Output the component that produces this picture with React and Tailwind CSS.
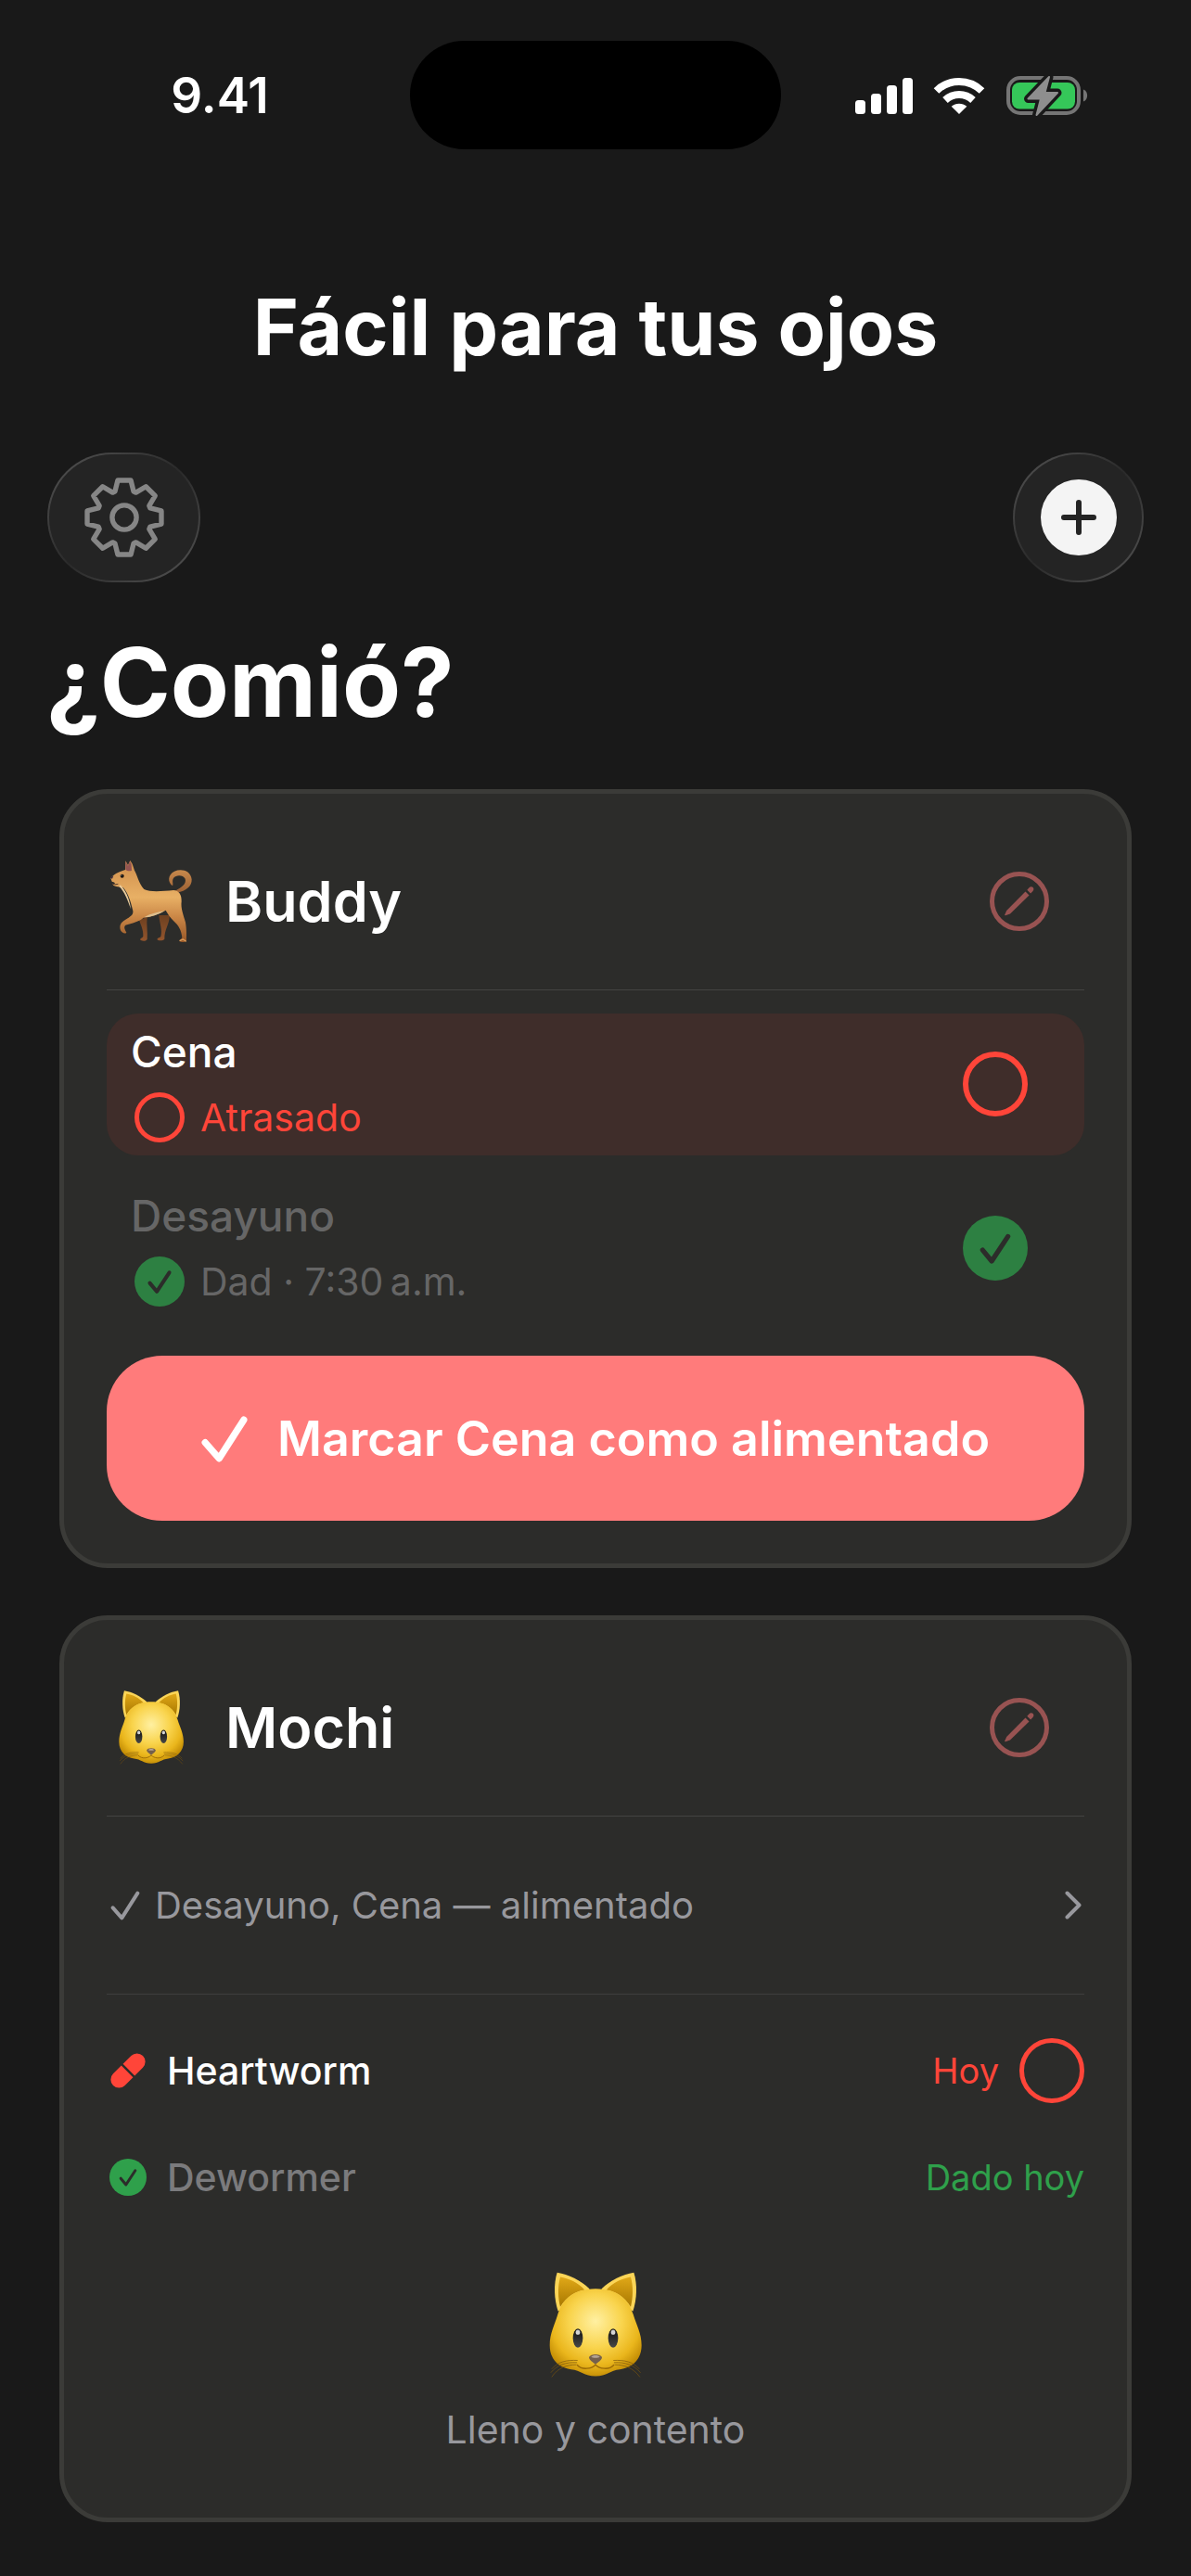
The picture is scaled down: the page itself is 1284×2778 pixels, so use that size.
import React from "react";

const gearPoints = [0, 1, 2, 3, 4, 5, 6, 7]
  .flatMap((tooth) => {
    const angle = (tooth * Math.PI) / 4;
    return [
      [-30, -83],
      [-21, -119],
      [21, -119],
      [30, -83],
    ].map(([x, y]) => {
      const px = x * Math.cos(angle) - y * Math.sin(angle);
      const py = x * Math.sin(angle) + y * Math.cos(angle);
      return `${px.toFixed(1)},${py.toFixed(1)}`;
    });
  })
  .join(" ");

function GearIcon() {
  return (
    <svg viewBox="-128 -128 256 256" className="size-[86px]" fill="none" stroke="#868686" strokeWidth="16" strokeLinejoin="round">
      <polygon points={gearPoints} />
      <circle r="39" />
    </svg>
  );
}

function PlusIcon() {
  return (
    <svg viewBox="0 0 82 82" className="size-[82px]">
      <circle cx="41" cy="41" r="41" fill="#f4f4f4" />
      <path d="M41 25v32M25 41h32" stroke="#242424" strokeWidth="6" strokeLinecap="round" />
    </svg>
  );
}

function PencilIcon() {
  return (
    <svg viewBox="0 0 64 64" className="size-16">
      <circle cx="32" cy="32" r="29.5" fill="none" stroke="#985352" strokeWidth="5" />
      <path d="M38.5 21.5l4 4L22 45.5l-5 1.8c-.6.2-1-.2-.8-.8l2-4.6z" fill="#985352" />
      <path d="M40.3 19.7l2-2.2c1.4-1.6 3.4-1.5 4.4-.4s1 2.8-.4 4.2l-2.2 2.2z" fill="#985352" />
    </svg>
  );
}

function CheckIcon({ className, strokeWidth }) {
  return (
    <svg viewBox="0 0 48 48" className={className} fill="none" stroke="currentColor" strokeWidth={strokeWidth} strokeLinecap="round" strokeLinejoin="round">
      <path d="M4 27.5l14.5 16.5L44 4" />
    </svg>
  );
}

function CheckCircle({ className }) {
  return (
    <svg viewBox="0 0 100 100" className={className}>
      <circle cx="50" cy="50" r="50" fill="currentColor" />
      <path d="M30.5 53L44.5 70L69.5 32" fill="none" stroke="#2c2c2a" strokeWidth="7.5" strokeLinecap="round" strokeLinejoin="round" />
    </svg>
  );
}

function PillIcon() {
  return (
    <svg viewBox="0 0 38 38" className="size-10" fill="#ff4539">
      <g transform="rotate(-45 19 19)">
        <path d="M17.8 10.5H6a8.5 8.5 0 0 0 0 17h11.8z" />
        <path d="M20.2 10.5H32a8.5 8.5 0 0 1 0 17H20.2z" />
      </g>
    </svg>
  );
}

function ChevronIcon() {
  return (
    <svg viewBox="0 0 18 31" className="h-[31px] w-[18px]" fill="none" stroke="#98989d" strokeWidth="4" strokeLinecap="round" strokeLinejoin="round">
      <path d="M2.5 2.5L15.5 15.5L2.5 28.5" />
    </svg>
  );
}

function StatusIcons() {
  return (
    <svg viewBox="0 0 251 44" className="h-11 w-[251px]">
      <g fill="#fff">
        <rect x="0" y="27" width="11" height="15" rx="3.5" />
        <rect x="17" y="20" width="11" height="22" rx="3.5" />
        <rect x="34" y="11" width="11" height="31" rx="3.5" />
        <rect x="51" y="3" width="11" height="39" rx="3.5" />
      </g>
      <g fill="none" stroke="#fff">
        <path d="M87.5 17a35 35 0 0 1 49 0" strokeWidth="8" />
        <path d="M97 27a22 22 0 0 1 30 0" strokeWidth="8" />
      </g>
      <path d="M112 42l-8.3-8.3c4.7-4 11.9-4 16.6 0z" fill="#fff" />
      <rect x="165" y="3" width="76" height="38" rx="13" fill="none" stroke="#757575" strokeWidth="4" />
      <rect x="169" y="8" width="68" height="28.5" rx="8" fill="#35c759" />
      <path d="M246 15.5c5.5 2 5.5 11 0 13z" fill="#757575" />
      <path
        d="M209 2l-22.5 23.5h13.5L195.5 43l22.5-24h-13.5z"
        fill="#191919"
        stroke="#191919"
        strokeWidth="9"
        strokeLinejoin="round"
      />
      <path
        d="M209 2l-22.5 23.5h13.5L195.5 43l22.5-24h-13.5z"
        fill="#8e8e8e"
        stroke="#8e8e8e"
        strokeWidth="2"
        strokeLinejoin="round"
      />
    </svg>
  );
}

function Dog() {
  return (
    <svg viewBox="178 262 270 270" className="size-[90px]" role="img" aria-label="Perro">
      <defs>
        <linearGradient id="dogCoat" x1="0" y1="0" x2="0" y2="1">
          <stop offset="0" stopColor="#cf8d4b" />
          <stop offset="0.45" stopColor="#e8b065" />
          <stop offset="0.7" stopColor="#c98545" />
          <stop offset="1" stopColor="#965728" />
        </linearGradient>
        <linearGradient id="dogTail" x1="0" y1="0" x2="0" y2="1">
          <stop offset="0" stopColor="#c8894c" />
          <stop offset="1" stopColor="#9a5f33" />
        </linearGradient>
        <linearGradient id="dogLeg" x1="0" y1="0" x2="0" y2="1">
          <stop offset="0" stopColor="#6d4020" />
          <stop offset="1" stopColor="#93552d" />
        </linearGradient>
      </defs>
      <path d="M274 458L300 448C297 470 302 495 300 520C295 528 280 526 277 521C278 516 286 514 287 510C288 490 280 475 274 458Z" fill="url(#dogLeg)" />
      <path d="M338 442L372 442C374 468 355 488 356 519C350 526 335 525 332 520C333 515 342 514 344 511C350 488 340 470 338 442Z" fill="url(#dogLeg)" />
      <path
        d="M397 370C426 362 445 350 444 326C440 296 410 291 388 300C366 311 366 335 382 347C386 340 379 332 385 322C394 310 416 311 423 324C428 341 410 352 391 363Z"
        fill="url(#dogTail)"
      />
      <path
        d="M182 322C190 312 205 302 229 295L230 266L238 280L245 265L252 276L259 297C268 312 272 338 290 358C310 368 350 364 385 361C402 362 412 374 411 397C408 420 417 440 424 465C428 490 427 505 427 524C425 531 410 530 405 527C404 521 412 518 413 514C410 490 402 475 385 460C375 450 368 440 360 426C335 440 310 448 288 450C275 462 250 468 230 474C223 480 228 488 233 498C228 504 218 498 214 491C209 475 215 465 229 457C245 447 256 442 254 428C247 400 239 370 222 352C206 350 191 350 188 341C196 340 202 338 186 333Z"
        fill="url(#dogCoat)"
      />
      <path d="M209 349C226 364 238 395 247 422C243 385 228 359 213 344Z" fill="#e9cb9b" />
      <path d="M290 449C310 437 335 431 357 428C336 441 312 448 290 449Z" fill="#dcbf90" />
      <path d="M230 294L230 268L238 282L244 267L249 278L250 297C243 301 235 298 230 294Z" fill="#945552" />
      <path d="M182 318L191 315L187 324L182 322Z" fill="#3a2a3a" />
      <path d="M188 340C196 344 202 342 206 341" stroke="#4a3125" strokeWidth="3" fill="none" />
      <circle cx="219" cy="315" r="6" fill="#17120f" />
      <circle cx="217" cy="313" r="1.5" fill="#d8d8d8" />
      <path d="M406 524l10-4l9 6" stroke="#e0a05a" strokeWidth="4" fill="none" strokeLinecap="round" />
    </svg>
  );
}

function Cat({ className }) {
  return (
    <svg viewBox="390 88 306 350" className={className} role="img" aria-label="Gato">
      <defs>
        <radialGradient id="catFace" gradientUnits="userSpaceOnUse" cx="543" cy="250" r="190">
          <stop offset="0" stopColor="#fff0a2" />
          <stop offset="0.45" stopColor="#f9d44d" />
          <stop offset="0.75" stopColor="#eab61c" />
          <stop offset="1" stopColor="#bb8400" />
        </radialGradient>
        <linearGradient id="catEar" x1="0" y1="0" x2="0" y2="1">
          <stop offset="0" stopColor="#e0a818" />
          <stop offset="1" stopColor="#a87800" />
        </linearGradient>
        <linearGradient id="catEye" x1="0" y1="0" x2="0" y2="1">
          <stop offset="0" stopColor="#111" />
          <stop offset="1" stopColor="#484848" />
        </linearGradient>
      </defs>
      <path d="M419 93C407 130 409 180 422 218L524 146C495 118 455 99 419 93Z" fill="#fbd557" />
      <path d="M667 93C679 130 677 180 664 218L562 146C591 118 631 99 667 93Z" fill="#fbd557" />
      <path d="M429 107C420 140 422 175 429 204C450 170 480 152 508 149C488 126 455 111 429 107Z" fill="url(#catEar)" />
      <path d="M657 107C666 140 664 175 657 204C636 170 606 152 578 149C598 126 631 111 657 107Z" fill="url(#catEar)" />
      <path
        d="M543 145C620 145 653 188 665 228C675 262 692 290 692 328C692 375 660 401 622 406C590 409 580 428 543 428C506 428 496 409 464 406C426 401 395 375 395 328C395 290 411 262 421 228C433 188 466 145 543 145Z"
        fill="url(#catFace)"
      />
      <g fill="none" stroke="#7a5410" strokeWidth="2.5" strokeLinecap="round" opacity="0.8">
        <path d="M484 377C450 375 420 382 402 404" />
        <path d="M482 384C448 382 418 392 399 416" />
        <path d="M480 391C450 391 422 400 402 430" />
        <path d="M602 377C636 375 666 382 684 404" />
        <path d="M604 384C638 382 668 392 688 416" />
        <path d="M606 391C636 391 664 400 686 430" />
      </g>
      <path d="M484 392C500 410 530 404 543 391C556 404 586 410 602 392" fill="none" stroke="#9b6a06" strokeWidth="4" strokeLinecap="round" />
      <ellipse cx="486" cy="305" rx="16" ry="31" fill="url(#catEye)" />
      <ellipse cx="600" cy="305" rx="16" ry="31" fill="url(#catEye)" />
      <ellipse cx="486" cy="286" rx="7" ry="8" fill="#e8e8e8" opacity="0.9" />
      <ellipse cx="600" cy="286" rx="7" ry="8" fill="#e8e8e8" opacity="0.9" />
      <path d="M522 368C524 354 562 354 564 368C563 376 550 384 543 390C536 384 523 376 522 368Z" fill="#75604c" />
      <path d="M529 366C535 359 551 359 557 366C551 370 535 370 529 366Z" fill="#b5a494" />
    </svg>
  );
}

function GlassButton({ label, className, children }) {
  return (
    <button
      type="button"
      aria-label={label}
      className="rounded-full bg-linear-to-br from-[#565656] via-[#2a2a2a] to-[#565656] p-[2px]"
    >
      <span className={`flex items-center justify-center rounded-full bg-[#242424] ${className}`}>
        {children}
      </span>
    </button>
  );
}

function PetCard({ name, avatar, className, children }) {
  return (
    <section className={`rounded-[52px] border-5 border-[#3b3b38] bg-[#2c2c2a] px-[46px] pt-5 ${className}`}>
      <div className="flex h-48 items-center gap-8 border-b border-[#444442] pr-[38px]">
        <div className="flex w-24 justify-center">{avatar}</div>
        <h2 className="flex-1 text-[61px] leading-[80px] font-semibold">{name}</h2>
        <button type="button" aria-label={`Editar ${name}`}>
          <PencilIcon />
        </button>
      </div>
      {children}
    </section>
  );
}

function MealRow({ meal, status, done }) {
  return (
    <div
      className={`flex items-center justify-between rounded-[34px] pt-[13px] pr-[61px] pb-[14px] pl-[26px] ${
        done ? "text-[#666666]" : "bg-[#3f2d2a] text-white"
      }`}
    >
      <div>
        <h3 className="text-[46px] leading-[56px] font-medium">{meal}</h3>
        <div className="mt-4 flex items-center gap-[17px] pl-1">
          {done ? (
            <CheckCircle className="size-[54px] text-[#2d8042]" />
          ) : (
            <span className="size-[54px] rounded-full border-[5px] border-[#ff4539]" />
          )}
          <span className={`text-[41px] leading-[54px] ${done ? "" : "text-[#ff4539]"}`}>
            {status}
          </span>
        </div>
      </div>
      {done ? (
        <button type="button" aria-label={`Desmarcar ${meal}`}>
          <CheckCircle className="size-[70px] text-[#2d8042]" />
        </button>
      ) : (
        <button
          type="button"
          aria-label={`Marcar ${meal}`}
          className="size-[70px] rounded-full border-[6px] border-[#ff4539]"
        />
      )}
    </div>
  );
}

function App() {
  return (
    <div className="min-h-screen bg-[#191919] pb-14 font-['Inter','Liberation_Sans',sans-serif] text-white">
      <div className="flex items-center pt-11">
        <div className="flex flex-1 justify-center pl-8">
          <span className="text-[53px] leading-[64px] font-semibold">9.41</span>
        </div>
        <div className="h-[117px] w-[400px] rounded-full bg-black" />
        <div className="flex flex-1 justify-center pr-8">
          <StatusIcons />
        </div>
      </div>

      <p className="mt-[136px] text-center text-[84px] leading-[112px] font-bold">
        Fácil para tus ojos
      </p>

      <div className="mt-[79px] flex items-center justify-between px-[51px]">
        <GlassButton label="Ajustes" className="h-[136px] w-[161px]">
          <GearIcon />
        </GlassButton>
        <GlassButton label="Agregar" className="h-[136px] w-[137px]">
          <PlusIcon />
        </GlassButton>
      </div>

      <h1 className="mt-11 px-[50px] text-[103px] leading-[128px] font-bold">¿Comió?</h1>

      <main className="mt-[51px] flex flex-col gap-[51px] px-16">
        <PetCard name="Buddy" avatar={<Dog />} className="pb-[46px]">
          <div className="mt-[25px] flex flex-col gap-6">
            <MealRow meal="Cena" status="Atrasado" />
            <MealRow meal="Desayuno" status={"Dad · 7:30\u202fa.m."} done />
          </div>
          <button
            type="button"
            className="mt-[39px] flex h-[178px] w-full items-center justify-center gap-8 rounded-[60px] bg-[#ff7b7b] pt-[2px]"
          >
            <CheckIcon className="size-[50px]" strokeWidth="7" />
            <span className="text-[52px] leading-[64px] font-semibold">
              Marcar Cena como alimentado
            </span>
          </button>
        </PetCard>

        <PetCard name="Mochi" avatar={<Cat className="h-[82px] w-[72px]" />} className="pb-[71px]">
          <button
            type="button"
            className="flex h-[192px] w-full items-center border-b border-[#3f3f3e] pr-[3px] pl-1 text-[#98989d]"
          >
            <CheckIcon className="size-8" strokeWidth="6" />
            <span className="ml-4 flex-1 text-left text-[40px] leading-[48px]">
              Desayuno, Cena — alimentado
            </span>
            <ChevronIcon />
          </button>

          <ul className="mt-[47px] text-[41px] leading-[48px]">
            <li className="flex h-[70px] items-center gap-[22px] pl-[3px]">
              <PillIcon />
              <span className="flex-1 font-medium">Heartworm</span>
              <span className="text-[38px] text-[#ff4539]">Hoy</span>
              <button
                type="button"
                aria-label="Marcar Heartworm"
                className="size-[70px] rounded-full border-[5px] border-[#ff4539]"
              />
            </li>
            <li className="mt-[60px] flex h-10 items-center gap-[22px] pl-[3px]">
              <CheckCircle className="size-10 text-[#2fa04b]" />
              <span className="flex-1 font-medium text-[#7b7b7d]">Dewormer</span>
              <span className="text-[38px] text-[#2fa04b]">Dado hoy</span>
            </li>
          </ul>

          <div className="mt-[81px] flex flex-col items-center gap-[30px]">
            <Cat className="h-[117px] w-[102px]" />
            <p className="text-[41px] leading-[48px] text-[#98989d]">Lleno y contento</p>
          </div>
        </PetCard>
      </main>
    </div>
  );
}

export default App;
